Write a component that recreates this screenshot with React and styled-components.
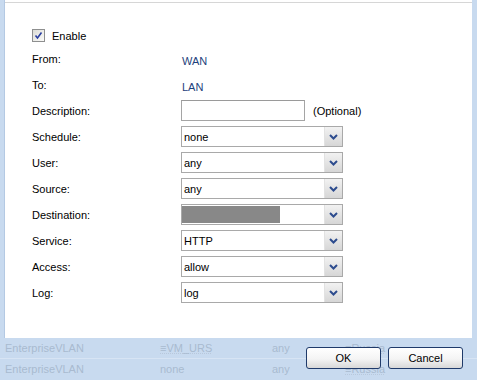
import React from "react";
import styled, { createGlobalStyle } from "styled-components";

const Global = createGlobalStyle`
  html, body { margin: 0; padding: 0; }
  body { font-family: "Liberation Sans", Arial, sans-serif; font-size: 11px; }
`;

const Page = styled.div`
  width: 477px;
  height: 380px;
  background: #c8daef;
  display: flex;
  flex-direction: column;
  overflow: hidden;
`;

const Panel = styled.div`
  height: 338px;
  margin: 0 5px 0 4px;
  background: #ffffff;
  border-left: 1px solid #b4c9e3;
  box-sizing: border-box;
  display: flex;
  flex-direction: column;
`;

const TopRule = styled.div`
  height: 2px;
  border-bottom: 1px solid #d6d6d6;
`;

const Form = styled.div`
  padding: 26px 0 0 27px;
  display: flex;
  flex-direction: column;
`;

const CheckRow = styled.label`
  display: flex;
  align-items: center;
  gap: 7px;
  height: 13px;
  margin-bottom: 6px;
  color: #000;
`;

const CheckBox = styled.span`
  width: 11px;
  height: 11px;
  border: 1px solid #8e8f8f;
  background: linear-gradient(135deg, #dcdcd6, #fbfbf9);
  display: flex;
  align-items: center;
  justify-content: center;
`;

const Grid = styled.div`
  display: grid;
  grid-template-columns: 149px auto;
  grid-auto-rows: 21px;
  row-gap: 5px;
  align-items: center;
`;

const Label = styled.div`
  color: #000;
`;

const Value = styled.div`
  color: #1e3f7c;
  padding: 5px 0 0 1px;
`;

const InputWrap = styled.div`
  display: flex;
  align-items: center;
  gap: 8px;
`;

const TextBox = styled.div`
  width: 124px;
  height: 21px;
  box-sizing: border-box;
  border: 1px solid #a5a5a5;
  border-top-color: #9a9a9a;
  background: #fff;
`;

const Hint = styled.span`
  color: #000;
`;

const Select = styled.div`
  width: 162px;
  height: 21px;
  box-sizing: border-box;
  border: 1px solid #a9a9a9;
  background: #fff;
  display: flex;
  align-items: stretch;
`;

const SelectText = styled.div`
  flex: 1;
  padding-left: ${(p) => (p.$flush ? "0" : "2px")};
  display: flex;
  align-items: center;
  color: #000;
`;

const Redacted = styled.div`
  width: 98px;
  align-self: stretch;
  margin: 1px 0 1px 0;
  background: #888888;
`;

const ArrowBtn = styled.div`
  width: 17px;
  border-left: 1px solid #e2e2e2;
  background: linear-gradient(#f2f2f2, #d6d6d6);
  display: flex;
  align-items: center;
  justify-content: center;
`;

const Footer = styled.div`
  flex: 1;
  display: grid;
  grid-template-areas: "stack";
`;

const Table = styled.div`
  grid-area: stack;
  display: grid;
  grid-template-rows: 21px 21px;
`;

const TRow = styled.div`
  display: grid;
  grid-template-columns: 155px 112px 73px auto;
  align-items: center;
  padding-left: 5px;
  color: #a9bad0;
  border-bottom: 1px solid ${(p) => (p.$last ? "transparent" : "#d7e4f4")};
`;

const Cell = styled.span`
  text-decoration: ${(p) => (p.$link ? "underline dotted #b8c8dc" : "none")};
`;

const Buttons = styled.div`
  grid-area: stack;
  justify-self: end;
  align-self: start;
  display: flex;
  gap: 7px;
  margin: 9px 14px 0 0;
`;

const Button = styled.button`
  width: 75px;
  height: 22px;
  border: 1px solid #1f3a6a;
  border-radius: 3px;
  background: linear-gradient(#ffffff 0%, #f4f4f4 55%, #d8d8d8 100%);
  font-family: "Liberation Sans", Arial, sans-serif;
  font-size: 11px;
  color: #000;
  padding: 0;
`;

const Chevron = () => (
  <svg width="9" height="6" viewBox="0 0 9 6">
    <path d="M1 1 L4.5 4.5 L8 1" fill="none" stroke="#2d4c8e" strokeWidth="2" />
  </svg>
);

const Check = () => (
  <svg width="9" height="9" viewBox="0 0 9 9">
    <path d="M1.5 4.5 L3.5 7 L7.5 1.5" fill="none" stroke="#2b3fa0" strokeWidth="1.6" />
  </svg>
);

const Drop = ({ children }) => (
  <Select>
    {children}
    <ArrowBtn>
      <Chevron />
    </ArrowBtn>
  </Select>
);

export default function App() {
  const selects = [
    ["Schedule:", "none"],
    ["User:", "any"],
    ["Source:", "any"],
    ["Destination:", null],
    ["Service:", "HTTP"],
    ["Access:", "allow"],
    ["Log:", "log"],
  ];
  return (
    <Page>
      <Global />
      <Panel>
        <TopRule />
        <Form>
          <CheckRow>
            <CheckBox>
              <Check />
            </CheckBox>
            Enable
          </CheckRow>
          <Grid>
            <Label>From:</Label>
            <Value>WAN</Value>
            <Label>To:</Label>
            <Value>LAN</Value>
            <Label>Description:</Label>
            <InputWrap>
              <TextBox />
              <Hint>(Optional)</Hint>
            </InputWrap>
            {selects.map(([l, v]) => (
              <React.Fragment key={l}>
                <Label>{l}</Label>
                <Drop>
                  {v === null ? (
                    <SelectText $flush>
                      <Redacted />
                    </SelectText>
                  ) : (
                    <SelectText>{v}</SelectText>
                  )}
                </Drop>
              </React.Fragment>
            ))}
          </Grid>
        </Form>
      </Panel>
      <Footer>
        <Table>
          <TRow>
            <Cell>EnterpriseVLAN</Cell>
            <Cell $link>≡VM_URS</Cell>
            <Cell>any</Cell>
            <Cell $link>≡Russia</Cell>
          </TRow>
          <TRow $last>
            <Cell>EnterpriseVLAN</Cell>
            <Cell>none</Cell>
            <Cell>any</Cell>
            <Cell $link>≡Russia</Cell>
          </TRow>
        </Table>
        <Buttons>
          <Button>OK</Button>
          <Button>Cancel</Button>
        </Buttons>
      </Footer>
    </Page>
  );
}
